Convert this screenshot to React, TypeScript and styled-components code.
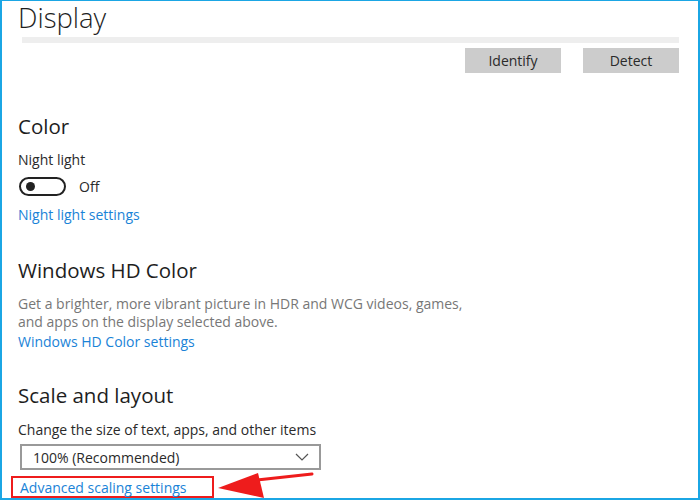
import React from "react";
import styled, { createGlobalStyle } from "styled-components";

const Global = createGlobalStyle`
  html, body { margin: 0; padding: 0; background: #fff; }
  body { font-family: "Open Sans", "Noto Sans", sans-serif; }
  * { box-sizing: border-box; }
`;

const Frame = styled.div`
  position: relative;
  width: 700px;
  height: 500px;
  overflow: hidden;
  background: #fff;
  border-style: solid;
  border-color: #1ba6e4;
  border-width: 1px 2px 2px 2px;
  padding: 0 19px 0 16px;
  display: flex;
  flex-direction: column;
`;

const Title = styled.h1`
  margin: 0;
  font-size: 27.5px;
  line-height: 33px;
  font-weight: 300;
  color: #1e1e1e;
`;

const MonitorBar = styled.div`
  margin: 3px 0 0 4px;
  height: 6px;
  background: #eeeeee;
`;

const ButtonRow = styled.div`
  display: flex;
  justify-content: flex-end;
  gap: 22px;
  margin-top: 5px;
`;

const GrayButton = styled.button`
  width: 96px;
  height: 25px;
  border: none;
  background: #cccccc;
  color: #2a2a2a;
  font-family: inherit;
  font-size: 14px;
  padding: 0;
`;

const SectionTitle = styled.h2<{ $mt: number }>`
  margin: ${(p) => p.$mt}px 0 0 0;
  font-size: 20.5px;
  line-height: 24px;
  font-weight: 400;
  color: #1e1e1e;
`;

const Label = styled.div<{ $mt: number }>`
  margin-top: ${(p) => p.$mt}px;
  font-size: 14px;
  line-height: 18px;
  color: #2a2a2a;
`;

const Description = styled.p`
  margin: 13px 0 0 0;
  font-size: 14px;
  line-height: 17.5px;
  color: #777777;
`;

const Link = styled.a<{ $mt: number }>`
  display: block;
  margin-top: ${(p) => p.$mt}px;
  font-size: 14px;
  line-height: 18px;
  color: #1a83d7;
  text-decoration: none;
`;

const ToggleRow = styled.div`
  display: flex;
  align-items: center;
  gap: 13px;
  margin-top: 7px;
  height: 20px;
  padding-left: 1px;
`;

const Toggle = styled.span`
  position: relative;
  width: 47px;
  height: 19px;
  border: 2px solid #222;
  border-radius: 10px;
  &::after {
    content: "";
    position: absolute;
    left: 5px;
    top: 3.5px;
    width: 9px;
    height: 9px;
    border-radius: 50%;
    background: #222;
  }
`;

const ToggleText = styled.span`
  font-size: 14px;
  color: #2a2a2a;
`;

const Select = styled.div`
  margin-top: 5px;
  margin-left: 2px;
  width: 301px;
  height: 26px;
  border: 2px solid #999999;
  display: flex;
  align-items: center;
  justify-content: space-between;
  padding: 0 10px 0 11px;
  font-size: 14px;
  color: #2a2a2a;
`;

const Annotated = styled.div`
  margin-top: 6px;
  margin-left: -7px;
  width: 203px;
  height: 22px;
  border: 2px solid #ee1c1c;
  padding-left: 7px;
  display: flex;
  align-items: center;
`;

const InlineLink = styled.a`
  font-size: 14px;
  color: #1a83d7;
  text-decoration: none;
  line-height: 18px;
  margin-top: 2px;
`;

const Arrow = styled.svg`
  position: absolute;
  left: 210px;
  top: 466px;
`;

export default function App() {
  return (
    <>
      <Global />
      <Frame>
        <Title>Display</Title>
        <MonitorBar />
        <ButtonRow>
          <GrayButton>Identify</GrayButton>
          <GrayButton>Detect</GrayButton>
        </ButtonRow>

        <SectionTitle $mt={41}>Color</SectionTitle>
        <Label $mt={13}>Night light</Label>
        <ToggleRow>
          <Toggle />
          <ToggleText>Off</ToggleText>
        </ToggleRow>
        <Link $mt={10} href="#">Night light settings</Link>

        <SectionTitle $mt={34}>Windows HD Color</SectionTitle>
        <Description>
          Get a brighter, more vibrant picture in HDR and WCG videos, games,
          <br />
          and apps on the display selected above.
        </Description>
        <Link $mt={3} href="#">Windows HD Color settings</Link>

        <SectionTitle $mt={32}>Scale and layout</SectionTitle>
        <Label $mt={14}>Change the size of text, apps, and other items</Label>
        <Select>
          <span>100% (Recommended)</span>
          <svg width="14" height="8" viewBox="0 0 14 8">
            <path d="M1 1 L7 7 L13 1" fill="none" stroke="#555" strokeWidth="1.2" />
          </svg>
        </Select>
        <Annotated>
          <InlineLink href="#">Advanced scaling settings</InlineLink>
        </Annotated>

        <Arrow width="110" height="34" viewBox="0 0 110 34">
          <path d="M100 7 L45 13" stroke="#ee1c1c" strokeWidth="3" strokeLinecap="round" />
          <path d="M6 21 L46 6 L52 31 Z" fill="#ee1c1c" />
        </Arrow>
      </Frame>
    </>
  );
}
